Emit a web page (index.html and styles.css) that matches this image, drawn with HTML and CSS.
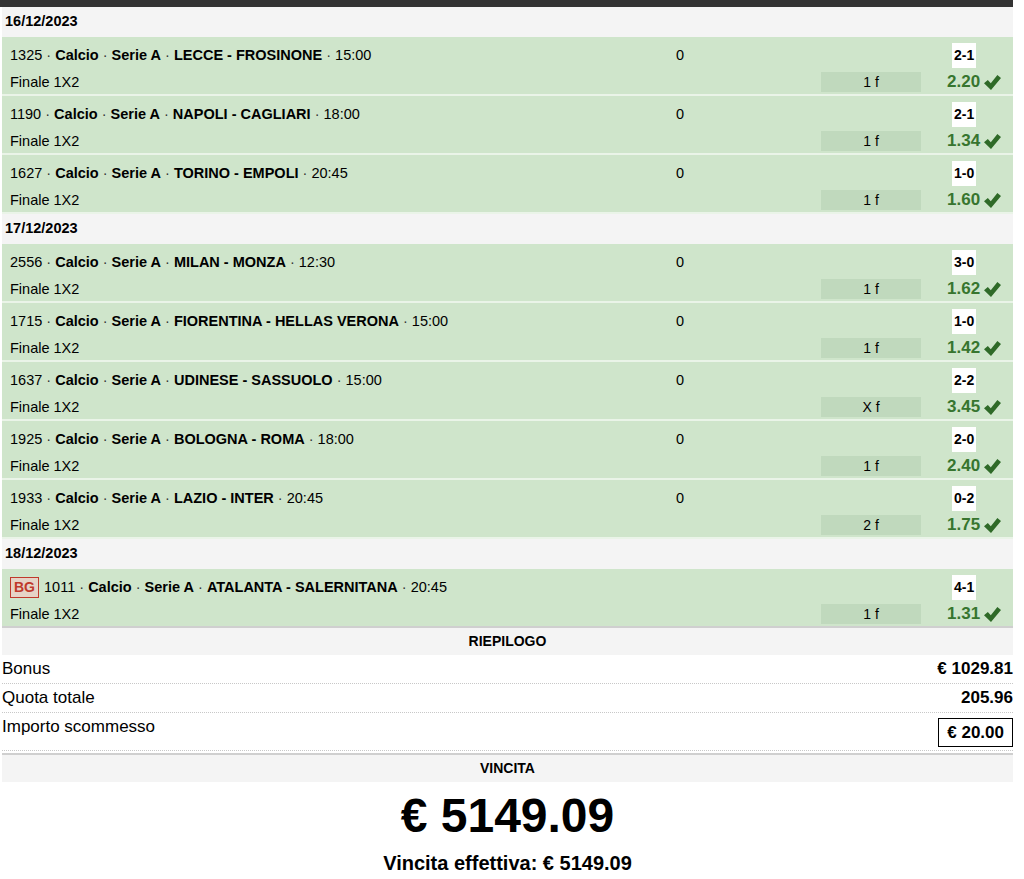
FILE: index.html
```html
<!DOCTYPE html>
<html lang="it">
<head>
<meta charset="utf-8">
<title>Schedina</title>
<link rel="stylesheet" href="styles.css">
</head>
<body>
<div class="topbar"></div>
<div class="slip">
  <div class="date">16/12/2023</div>
  <div class="ev">
    <div class="ev-title">1325 <span class="sep">·</span> <b>Calcio</b> <span class="sep">·</span> <b>Serie A</b> <span class="sep">·</span> <b>LECCE - FROSINONE</b> <span class="sep">·</span> 15:00</div>
    <div class="ev-zero">0</div>
    <div class="ev-empty"></div>
    <div class="ev-score"><span class="score">2-1</span></div>
    <div class="ev-market">Finale 1X2</div>
    <div class="ev-empty"></div>
    <div class="ev-pick">1 f</div>
    <div class="ev-odds">2.20 <svg class="check" viewBox="0 0 16 14"><path d="M0 7.8 L3.6 4.6 L6.4 7.6 L12.6 0 L16 2.8 L6.6 14 Z"/></svg></div>
  </div>
  <div class="ev">
    <div class="ev-title">1190 <span class="sep">·</span> <b>Calcio</b> <span class="sep">·</span> <b>Serie A</b> <span class="sep">·</span> <b>NAPOLI - CAGLIARI</b> <span class="sep">·</span> 18:00</div>
    <div class="ev-zero">0</div>
    <div class="ev-empty"></div>
    <div class="ev-score"><span class="score">2-1</span></div>
    <div class="ev-market">Finale 1X2</div>
    <div class="ev-empty"></div>
    <div class="ev-pick">1 f</div>
    <div class="ev-odds">1.34 <svg class="check" viewBox="0 0 16 14"><path d="M0 7.8 L3.6 4.6 L6.4 7.6 L12.6 0 L16 2.8 L6.6 14 Z"/></svg></div>
  </div>
  <div class="ev">
    <div class="ev-title">1627 <span class="sep">·</span> <b>Calcio</b> <span class="sep">·</span> <b>Serie A</b> <span class="sep">·</span> <b>TORINO - EMPOLI</b> <span class="sep">·</span> 20:45</div>
    <div class="ev-zero">0</div>
    <div class="ev-empty"></div>
    <div class="ev-score"><span class="score">1-0</span></div>
    <div class="ev-market">Finale 1X2</div>
    <div class="ev-empty"></div>
    <div class="ev-pick">1 f</div>
    <div class="ev-odds">1.60 <svg class="check" viewBox="0 0 16 14"><path d="M0 7.8 L3.6 4.6 L6.4 7.6 L12.6 0 L16 2.8 L6.6 14 Z"/></svg></div>
  </div>
  <div class="date">17/12/2023</div>
  <div class="ev">
    <div class="ev-title">2556 <span class="sep">·</span> <b>Calcio</b> <span class="sep">·</span> <b>Serie A</b> <span class="sep">·</span> <b>MILAN - MONZA</b> <span class="sep">·</span> 12:30</div>
    <div class="ev-zero">0</div>
    <div class="ev-empty"></div>
    <div class="ev-score"><span class="score">3-0</span></div>
    <div class="ev-market">Finale 1X2</div>
    <div class="ev-empty"></div>
    <div class="ev-pick">1 f</div>
    <div class="ev-odds">1.62 <svg class="check" viewBox="0 0 16 14"><path d="M0 7.8 L3.6 4.6 L6.4 7.6 L12.6 0 L16 2.8 L6.6 14 Z"/></svg></div>
  </div>
  <div class="ev">
    <div class="ev-title">1715 <span class="sep">·</span> <b>Calcio</b> <span class="sep">·</span> <b>Serie A</b> <span class="sep">·</span> <b>FIORENTINA - HELLAS VERONA</b> <span class="sep">·</span> 15:00</div>
    <div class="ev-zero">0</div>
    <div class="ev-empty"></div>
    <div class="ev-score"><span class="score">1-0</span></div>
    <div class="ev-market">Finale 1X2</div>
    <div class="ev-empty"></div>
    <div class="ev-pick">1 f</div>
    <div class="ev-odds">1.42 <svg class="check" viewBox="0 0 16 14"><path d="M0 7.8 L3.6 4.6 L6.4 7.6 L12.6 0 L16 2.8 L6.6 14 Z"/></svg></div>
  </div>
  <div class="ev">
    <div class="ev-title">1637 <span class="sep">·</span> <b>Calcio</b> <span class="sep">·</span> <b>Serie A</b> <span class="sep">·</span> <b>UDINESE - SASSUOLO</b> <span class="sep">·</span> 15:00</div>
    <div class="ev-zero">0</div>
    <div class="ev-empty"></div>
    <div class="ev-score"><span class="score">2-2</span></div>
    <div class="ev-market">Finale 1X2</div>
    <div class="ev-empty"></div>
    <div class="ev-pick">X f</div>
    <div class="ev-odds">3.45 <svg class="check" viewBox="0 0 16 14"><path d="M0 7.8 L3.6 4.6 L6.4 7.6 L12.6 0 L16 2.8 L6.6 14 Z"/></svg></div>
  </div>
  <div class="ev">
    <div class="ev-title">1925 <span class="sep">·</span> <b>Calcio</b> <span class="sep">·</span> <b>Serie A</b> <span class="sep">·</span> <b>BOLOGNA - ROMA</b> <span class="sep">·</span> 18:00</div>
    <div class="ev-zero">0</div>
    <div class="ev-empty"></div>
    <div class="ev-score"><span class="score">2-0</span></div>
    <div class="ev-market">Finale 1X2</div>
    <div class="ev-empty"></div>
    <div class="ev-pick">1 f</div>
    <div class="ev-odds">2.40 <svg class="check" viewBox="0 0 16 14"><path d="M0 7.8 L3.6 4.6 L6.4 7.6 L12.6 0 L16 2.8 L6.6 14 Z"/></svg></div>
  </div>
  <div class="ev">
    <div class="ev-title">1933 <span class="sep">·</span> <b>Calcio</b> <span class="sep">·</span> <b>Serie A</b> <span class="sep">·</span> <b>LAZIO - INTER</b> <span class="sep">·</span> 20:45</div>
    <div class="ev-zero">0</div>
    <div class="ev-empty"></div>
    <div class="ev-score"><span class="score">0-2</span></div>
    <div class="ev-market">Finale 1X2</div>
    <div class="ev-empty"></div>
    <div class="ev-pick">2 f</div>
    <div class="ev-odds">1.75 <svg class="check" viewBox="0 0 16 14"><path d="M0 7.8 L3.6 4.6 L6.4 7.6 L12.6 0 L16 2.8 L6.6 14 Z"/></svg></div>
  </div>
  <div class="date">18/12/2023</div>
  <div class="ev ev-last">
    <div class="ev-title"><span class="bg">BG</span> 1011 <span class="sep">·</span> <b>Calcio</b> <span class="sep">·</span> <b>Serie A</b> <span class="sep">·</span> <b>ATALANTA - SALERNITANA</b> <span class="sep">·</span> 20:45</div>
    <div class="ev-zero"></div>
    <div class="ev-empty"></div>
    <div class="ev-score"><span class="score">4-1</span></div>
    <div class="ev-market">Finale 1X2</div>
    <div class="ev-empty"></div>
    <div class="ev-pick">1 f</div>
    <div class="ev-odds">1.31 <svg class="check" viewBox="0 0 16 14"><path d="M0 7.8 L3.6 4.6 L6.4 7.6 L12.6 0 L16 2.8 L6.6 14 Z"/></svg></div>
  </div>

  <div class="sec-head">RIEPILOGO</div>
  <div class="sum-row"><span class="sum-label">Bonus</span><span class="sum-val">€ 1029.81</span></div>
  <div class="sum-row"><span class="sum-label">Quota totale</span><span class="sum-val">205.96</span></div>
  <div class="sum-row sum-stake"><span class="sum-label">Importo scommesso</span><span class="sum-val stake-box">€ 20.00</span></div>

  <div class="sec-head sec-win">VINCITA</div>
  <div class="win-amount">€ 5149.09</div>
  <div class="win-eff">Vincita effettiva: € 5149.09</div>
</div>
</body>
</html>
```
FILE: styles.css
```css
* { box-sizing: border-box; }
html, body { margin: 0; padding: 0; background: #fff; }
body {
  font-family: "Liberation Sans", Arial, Helvetica, sans-serif;
  color: #000;
  font-size: 14px;
}
.topbar {
  width: 1013px;
  height: 7px;
  background: #333;
}
.slip {
  width: 1013px;
  padding-left: 2px;
}
.date {
  height: 30px;
  line-height: 28px;
  padding-left: 3px;
  background: #f4f4f4;
  font-weight: bold;
  font-size: 14.5px;
}
.ev {
  display: grid;
  grid-template-columns: 1fr 145px 100px 92px;
  grid-template-rows: 25px 20px;
  row-gap: 4px;
  padding: 6px 0 2px 8px;
  height: 59px;
  background: #cfe5cb;
  border-bottom: 2px solid #eaf4e8;
  align-items: center;
  font-size: 14.5px;
}
.ev-last { border-bottom: 2px solid #cfcfcf; }
.ev-title { white-space: nowrap; line-height: 17px; }
.ev-title .sep { color: #333; }
.ev-market { line-height: 20px; }
.ev-zero { line-height: 17px; }
.ev-score { padding-left: 31px; height: 25px; }
.score {
  display: inline-block;
  background: #fff;
  font-weight: bold;
  font-size: 14px;
  line-height: 17px;
  padding: 4px 2px;
  height: 25px;
}
.ev-pick {
  background: #c0d9bd;
  height: 20px;
  line-height: 20px;
  text-align: center;
  font-size: 14px;
}
.ev-odds {
  padding-left: 26px;
  font-weight: bold;
  font-size: 17px;
  line-height: 20px;
  color: #37752f;
  white-space: nowrap;
  display: flex;
  align-items: center;
  gap: 4px;
}
.check {
  width: 17px;
  height: 15px;
  fill: #2f6a28;
  margin-top: 1px;
}
.bg {
  display: inline-block;
  border: 1px solid #c0392b;
  background: #e6d3c6;
  color: #c0392b;
  font-weight: bold;
  font-size: 14px;
  line-height: 19px;
  padding: 0 3px;
  margin-right: 1px;
}
.sec-head {
  height: 27px;
  line-height: 27px;
  text-align: center;
  background: #f4f4f4;
  font-weight: bold;
  font-size: 14px;
}
.sec-win {
  margin-top: 2px;
  border-top: 2px solid #cfcfcf;
  height: 29px;
  line-height: 26px;
}
.sum-row {
  display: flex;
  justify-content: space-between;
  align-items: flex-start;
  padding: 4px 0;
  font-size: 17px;
  line-height: 20px;
  border-bottom: 1px dotted #c8c8c8;
}
.sum-val { font-weight: bold; }
.sum-stake { padding-bottom: 3px; }
.stake-box {
  border: 1.5px solid #000;
  padding: 3px 8px;
  line-height: 21px;
  margin-top: 1px;
}
.win-amount {
  margin-top: 6px;
  text-align: center;
  font-weight: bold;
  font-size: 48px;
  line-height: 56px;
}
.win-eff {
  margin-top: 7px;
  text-align: center;
  font-weight: bold;
  font-size: 20px;
  line-height: 24px;
}
```
